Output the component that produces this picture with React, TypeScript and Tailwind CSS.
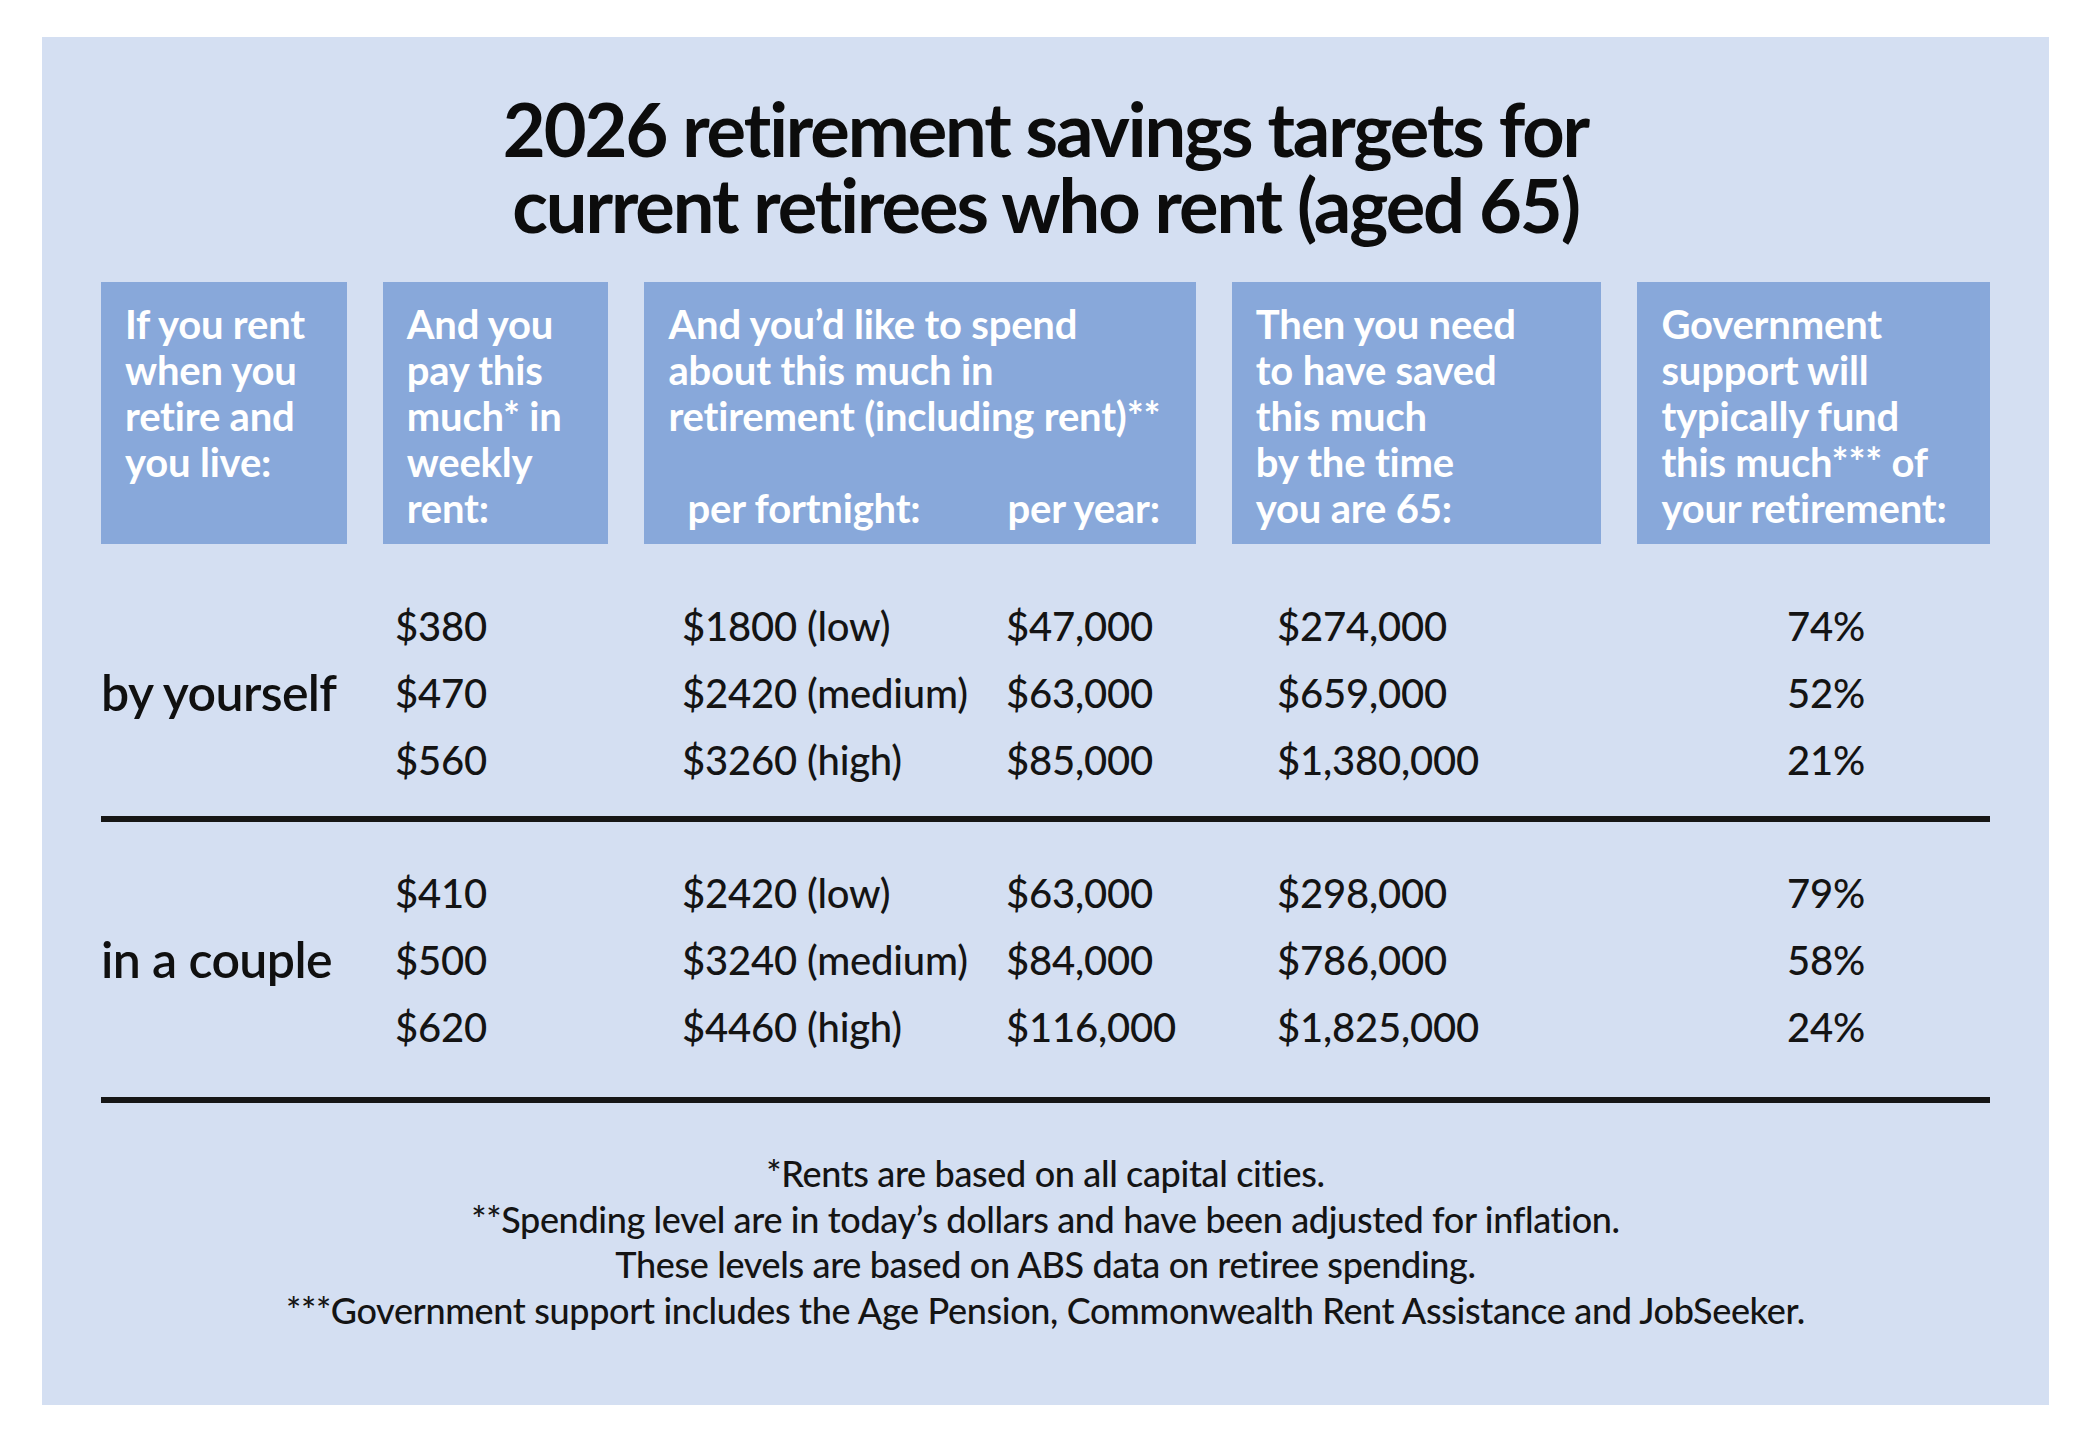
const groups = [
  {
    label: 'by yourself',
    rows: [
      ['$380', '$1800 (low)', '$47,000', '$274,000', '74%'],
      ['$470', '$2420 (medium)', '$63,000', '$659,000', '52%'],
      ['$560', '$3260 (high)', '$85,000', '$1,380,000', '21%'],
    ],
  },
  {
    label: 'in a couple',
    rows: [
      ['$410', '$2420 (low)', '$63,000', '$298,000', '79%'],
      ['$500', '$3240 (medium)', '$84,000', '$786,000', '58%'],
      ['$620', '$4460 (high)', '$116,000', '$1,825,000', '24%'],
    ],
  },
];

const notes = [
  '*Rents are based on all capital cities.',
  '**Spending level are in today\u2019s dollars and have been adjusted for inflation.',
  'These levels are based on ABS data on retiree spending.',
  '***Government support includes the Age Pension, Commonwealth Rent Assistance and JobSeeker.',
];

function HeaderBox({ className, children }: { className: string; children: React.ReactNode }) {
  return (
    <div className={`h-[262px] bg-[#88a8da] pt-[19px] pl-[24px] text-[40px] font-bold leading-[46px] tracking-[-0.005em] text-white ${className}`}>
      {children}
    </div>
  );
}

export default function App() {
  return (
    <div className="min-h-screen bg-white pt-[37px] pl-[42px] font-['Lato',sans-serif]">
      <div className="flex h-[1368px] w-[2007px] flex-col bg-[#d4dff2] px-[59px] text-[#141414]">
        <h1 className="mt-[54px] text-center text-[74px] font-bold tracking-[-0.028em] text-[#0c0c0c]">
          <div className="leading-[76px]">2026 retirement savings targets for</div>
          <div className="leading-[76px]">current retirees who rent (aged 65)</div>
        </h1>

        <div className="mt-[39px] flex gap-[36px]">
          <HeaderBox className="w-[246px]">
            If you rent
            <br />
            when you
            <br />
            retire and
            <br />
            you live:
          </HeaderBox>
          <HeaderBox className="w-[226px]">
            And you
            <br />
            pay this
            <br />
            much* in
            <br />
            weekly
            <br />
            rent:
          </HeaderBox>
          <HeaderBox className="w-[552px]">
            And you’d like to spend
            <br />
            about this much in
            <br />
            retirement (including rent)**
            <div className="mt-[46px] flex pl-[19px]">
              <span className="w-[320px]">per fortnight:</span>
              <span>per year:</span>
            </div>
          </HeaderBox>
          <HeaderBox className="w-[370px]">
            Then you need
            <br />
            to have saved
            <br />
            this much
            <br />
            by the time
            <br />
            you are 65:
          </HeaderBox>
          <HeaderBox className="w-[353px]">
            Government
            <br />
            support will
            <br />
            typically fund
            <br />
            this much*** of
            <br />
            your retirement:
          </HeaderBox>
        </div>

        {groups.map((group, gi) => (
          <div key={group.label}>
            <div className={`flex ${gi === 0 ? 'mt-[48px]' : 'mt-[37px]'}`}>
              <div className="flex w-[294px] items-center text-[50px] font-semibold tracking-[-0.012em] text-[#101010]">
                {group.label}
              </div>
              <div className="flex flex-col">
                {group.rows.map((row) => (
                  <div
                    key={row[0]}
                    className="grid h-[67px] grid-cols-[287px_324px_271px_510px_120px] items-center text-[40px] font-medium tracking-[-0.005em]"
                  >
                    {row.map((cell, ci) => (
                      <span key={ci}>{cell}</span>
                    ))}
                  </div>
                ))}
              </div>
            </div>
            <div className={`h-[6px] bg-[#161616] ${gi === 0 ? 'mt-[23px]' : 'mt-[37px]'}`} />
          </div>
        ))}

        <div className="mt-[48px] flex flex-col items-center text-[36px] font-medium leading-[45.5px] tracking-[-0.01em] text-[#141414]">
          {notes.map((n) => (
            <p key={n}>{n}</p>
          ))}
        </div>
      </div>
    </div>
  );
}
